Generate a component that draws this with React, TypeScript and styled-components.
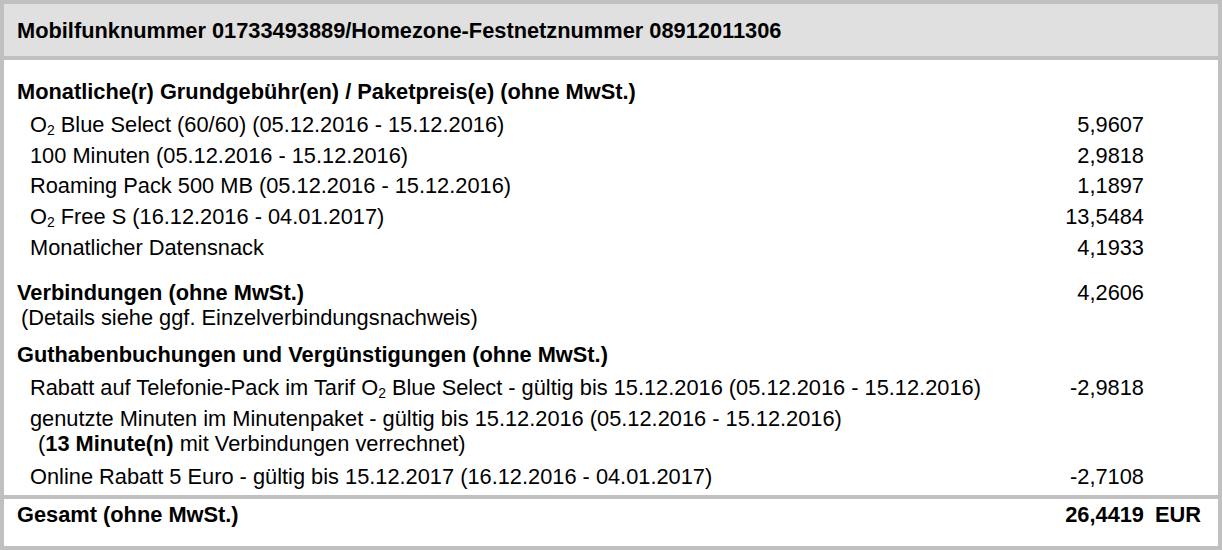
import React from 'react';
import styled, { createGlobalStyle } from 'styled-components';

const GlobalStyle = createGlobalStyle`
  html, body {
    margin: 0;
    padding: 0;
    background: #ffffff;
  }
  body {
    font-family: "Liberation Sans", Arial, sans-serif;
    color: #000000;
  }
`;

const Frame = styled.div`
  width: 1222px;
  height: 550px;
  box-sizing: border-box;
  border: 4px solid #c0c0c0;
  background: #ffffff;
  display: flex;
  flex-direction: column;
  font-size: 21.8px;
  line-height: 24.8px;
`;

const Header = styled.div`
  height: 56px;
  box-sizing: border-box;
  padding: 15px 13px 0;
  background: #e0e0e0;
  border-bottom: 4px solid #c0c0c0;
  font-weight: bold;
`;

const Body = styled.div`
  padding: 17px 0 3px 13px;
  border-bottom: 4px solid #c0c0c0;
`;

const Section = styled.div<{ $gap?: number }>`
  margin-top: ${p => p.$gap ?? 0}px;
`;

const Row = styled.div<{ $heading?: boolean }>`
  display: flex;
  align-items: flex-start;
  padding: ${p => (p.$heading ? '3px 0 5px' : '3px 0')};
`;

const Label = styled.div<{ $indent?: boolean; $bold?: boolean }>`
  flex: 1;
  padding-left: ${p => (p.$indent ? 13 : 0)}px;
  font-weight: ${p => (p.$bold ? 'bold' : 'normal')};
`;

const Note = styled.div<{ $shift?: number; $after?: number }>`
  font-weight: normal;
  padding-left: ${p => p.$shift ?? 0}px;
  margin-bottom: ${p => p.$after ?? 0}px;
`;

const Amount = styled.div<{ $bold?: boolean }>`
  width: 160px;
  text-align: right;
  font-weight: ${p => (p.$bold ? 'bold' : 'normal')};
`;

const Currency = styled.div`
  width: 74px;
  box-sizing: border-box;
  padding-left: 11px;
  font-weight: bold;
`;

const Sub = styled.sub`
  font-size: 0.64em;
  line-height: 0;
  vertical-align: -0.22em;
`;

const Footer = styled.div`
  display: flex;
  align-items: flex-start;
  padding: 4px 0 0 13px;
  flex: 1;
`;

const O2 = () => (
  <>
    O<Sub>2</Sub>
  </>
);

type Item = { label: React.ReactNode; amount?: string; note?: React.ReactNode };

const grundgebuehren: Item[] = [
  { label: <><O2 /> Blue Select (60/60) (05.12.2016 - 15.12.2016)</>, amount: '5,9607' },
  { label: '100 Minuten (05.12.2016 - 15.12.2016)', amount: '2,9818' },
  { label: 'Roaming Pack 500 MB (05.12.2016 - 15.12.2016)', amount: '1,1897' },
  { label: <><O2 /> Free S (16.12.2016 - 04.01.2017)</>, amount: '13,5484' },
  { label: 'Monatlicher Datensnack', amount: '4,1933' },
];

const guthaben: Item[] = [
  {
    label: <>Rabatt auf Telefonie-Pack im Tarif <O2 /> Blue Select - gültig bis 15.12.2016 (05.12.2016 - 15.12.2016)</>,
    amount: '-2,9818',
  },
  {
    label: 'genutzte Minuten im Minutenpaket - gültig bis 15.12.2016 (05.12.2016 - 15.12.2016)',
    note: <>(<b>13 Minute(n)</b> mit Verbindungen verrechnet)</>,
  },
  {
    label: 'Online Rabatt 5 Euro - gültig bis 15.12.2017 (16.12.2016 - 04.01.2017)',
    amount: '-2,7108',
  },
];

const ItemRow = ({ item }: { item: Item }) => (
  <Row>
    <Label $indent>
      {item.label}
      {item.note && <Note $shift={8} $after={2}>{item.note}</Note>}
    </Label>
    <Amount>{item.amount}</Amount>
    <Currency />
  </Row>
);

export default function App() {
  return (
    <>
      <GlobalStyle />
      <Frame>
        <Header>Mobilfunknummer 01733493889/Homezone-Festnetznummer 08912011306</Header>
        <Body>
          <Section>
            <Row $heading>
              <Label $bold>Monatliche(r) Grundgebühr(en) / Paketpreis(e) (ohne MwSt.)</Label>
            </Row>
            {grundgebuehren.map((it, i) => (
              <ItemRow key={i} item={it} />
            ))}
          </Section>
          <Section $gap={14}>
            <Row>
              <Label $bold>
                Verbindungen (ohne MwSt.)
                <Note $shift={4}>(Details siehe ggf. Einzelverbindungsnachweis)</Note>
              </Label>
              <Amount>4,2606</Amount>
              <Currency />
            </Row>
          </Section>
          <Section $gap={7}>
            <Row $heading>
              <Label $bold>Guthabenbuchungen und Vergünstigungen (ohne MwSt.)</Label>
            </Row>
            {guthaben.map((it, i) => (
              <ItemRow key={i} item={it} />
            ))}
          </Section>
        </Body>
        <Footer>
          <Label $bold>Gesamt (ohne MwSt.)</Label>
          <Amount $bold>26,4419</Amount>
          <Currency>EUR</Currency>
        </Footer>
      </Frame>
    </>
  );
}
